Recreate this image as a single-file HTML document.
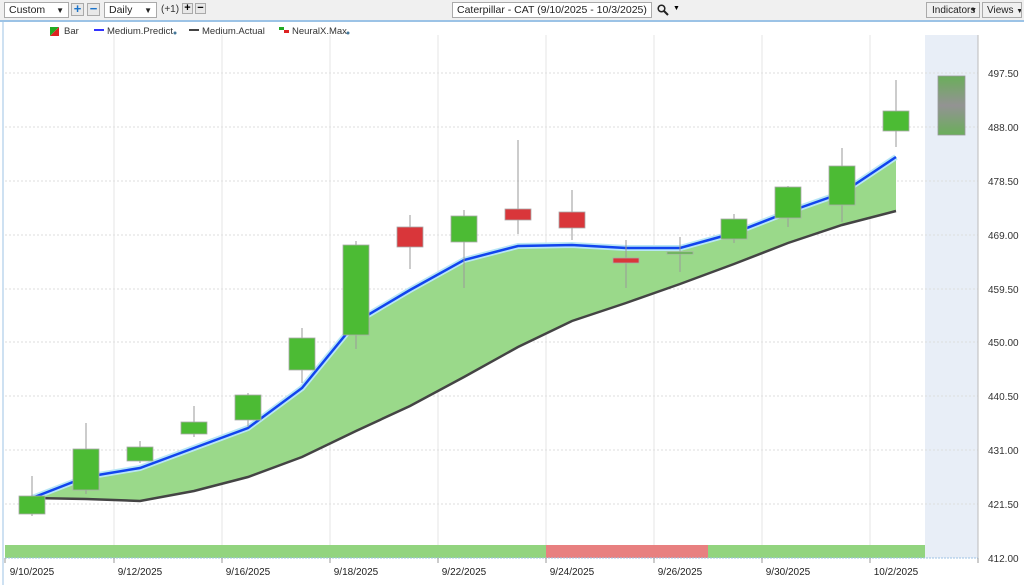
<!DOCTYPE html><html><head><style>
body{margin:0;width:1024px;height:585px;background:#fff;font-family:"Liberation Sans",sans-serif;overflow:hidden;position:relative}
.tb{position:absolute;left:0;top:0;width:1024px;height:20px;background:#f0f0f0;border-bottom:2px solid #9cc3e6}
.bx{position:absolute;top:2px;height:16px;border:1px solid #aaa;background:#fff;font-size:10.5px;line-height:15px;padding-left:4px;box-sizing:border-box;color:#222;white-space:nowrap;overflow:hidden}
.pb{position:absolute;top:3px;width:13px;height:13px;border:1px solid #aaa;background:#e8e8e8;box-sizing:border-box;color:#1a73c9;font-size:13px;line-height:10px;text-align:center;font-weight:bold}
svg text{font-family:"Liberation Sans",sans-serif}
</style></head><body>
<div class="tb">
<div class="bx" style="left:4px;width:65px">Custom<span style="position:absolute;right:4px;font-size:8px">▼</span></div>
<div class="pb" style="left:71px">+</div><div class="pb" style="left:87px">−</div>
<div class="bx" style="left:104px;width:53px">Daily<span style="position:absolute;right:4px;font-size:8px">▼</span></div>
<span style="position:absolute;left:161px;top:4px;font-size:10px;color:#333">(+1)</span>
<div class="pb" style="left:182px;width:11px;height:11px;color:#000;font-size:11px;line-height:9px">+</div><div class="pb" style="left:195px;width:11px;height:11px;color:#000;font-size:11px;line-height:9px">−</div>
<div class="bx" style="left:452px;width:200px;font-size:10.5px;padding-left:4px">Caterpillar - CAT (9/10/2025 - 10/3/2025)</div>
<svg style="position:absolute;left:657px;top:4px" width="12" height="12"><circle cx="4.5" cy="4.5" r="3.3" fill="none" stroke="#222" stroke-width="1.5"/><line x1="7" y1="7" x2="11" y2="11" stroke="#222" stroke-width="2"/></svg><span style="position:absolute;left:673px;top:5px;font-size:7px">▼</span>
<div class="bx" style="left:926px;width:54px;background:#f0f0f0;padding-left:5px;font-size:10px">Indicators<span style="position:absolute;right:2px;top:0;font-size:7px">▼</span></div>
<div class="bx" style="left:982px;width:40px;background:#f0f0f0;font-size:10px">Views <span style="font-size:7px">▼</span></div>
</div>
<svg width="1024" height="585" style="position:absolute;left:0;top:0" viewBox="0 0 1024 585">
<line x1="3" y1="22" x2="3" y2="585" stroke="#9cc3e6"/>
<rect x="925" y="35" width="53" height="523" fill="#e8eef7"/>
<g stroke="#ddd" stroke-dasharray="2,2">
<line x1="5" x2="978" y1="73" y2="73"/><line x1="5" x2="978" y1="127" y2="127"/><line x1="5" x2="978" y1="181" y2="181"/><line x1="5" x2="978" y1="235" y2="235"/><line x1="5" x2="978" y1="289" y2="289"/><line x1="5" x2="978" y1="342" y2="342"/><line x1="5" x2="978" y1="396" y2="396"/><line x1="5" x2="978" y1="450" y2="450"/><line x1="5" x2="978" y1="504" y2="504"/>
</g>
<g stroke="#e4e4e4"><line x1="114" x2="114" y1="35" y2="558"/><line x1="222" x2="222" y1="35" y2="558"/><line x1="330" x2="330" y1="35" y2="558"/><line x1="438" x2="438" y1="35" y2="558"/><line x1="546" x2="546" y1="35" y2="558"/><line x1="654" x2="654" y1="35" y2="558"/><line x1="762" x2="762" y1="35" y2="558"/><line x1="870" x2="870" y1="35" y2="558"/></g>
<line x1="978" y1="35" x2="978" y2="558" stroke="#bbb"/>
<polygon fill="#9ad98a" points="32,498 86,477 140,468 194,448 248,428 302,388 356,322 410,290 464,260 518,246 572,245 626,248 680,248 734,233 788,212 842,193 896,157 896,211 842,225 788,243 734,264 680,284 626,303 572,321 518,347 464,377 410,406 356,431 302,457 248,477 194,491 140,501 86,499 32,498"/>
<polyline fill="none" stroke="#444" stroke-width="2.5" points="32,498 86,499 140,501 194,491 248,477 302,457 356,431 410,406 464,377 518,347 572,321 626,303 680,284 734,264 788,243 842,225 896,211"/>
<polyline fill="none" stroke="#b8e6f5" stroke-width="6" points="32,498 86,477 140,468 194,448 248,428 302,388 356,322 410,290 464,260 518,246 572,245 626,248 680,248 734,233 788,212 842,193 896,157"/>
<polyline fill="none" stroke="#1144ee" stroke-width="2.5" points="32,498 86,477 140,468 194,448 248,428 302,388 356,322 410,290 464,260 518,246 572,245 626,248 680,248 734,233 788,212 842,193 896,157"/>
<g stroke="#999">
<line x1="32" x2="32" y1="476" y2="516"/><line x1="86" x2="86" y1="423" y2="494"/><line x1="140" x2="140" y1="441" y2="463"/><line x1="194" x2="194" y1="406" y2="437"/><line x1="248" x2="248" y1="393" y2="427"/><line x1="302" x2="302" y1="328" y2="383"/><line x1="356" x2="356" y1="241" y2="349"/><line x1="410" x2="410" y1="215" y2="269"/><line x1="464" x2="464" y1="210" y2="288"/><line x1="518" x2="518" y1="140" y2="234"/><line x1="572" x2="572" y1="190" y2="240"/><line x1="626" x2="626" y1="240" y2="288"/><line x1="680" x2="680" y1="237" y2="272"/><line x1="734" x2="734" y1="214" y2="243"/><line x1="788" x2="788" y1="186" y2="227"/><line x1="842" x2="842" y1="148" y2="222"/><line x1="896" x2="896" y1="80" y2="147"/>
</g>
<g stroke="#aaa" stroke-width="0.8" fill="#4cbb34">
<rect x="19" y="496" width="26" height="18"/><rect x="73" y="449" width="26" height="41"/><rect x="127" y="447" width="26" height="14"/><rect x="181" y="422" width="26" height="12"/><rect x="235" y="395" width="26" height="25"/><rect x="289" y="338" width="26" height="32"/><rect x="343" y="245" width="26" height="90"/>
<rect x="397" y="227" width="26" height="20" fill="#d9363a"/><rect x="451" y="216" width="26" height="26"/><rect x="505" y="209" width="26" height="11" fill="#d9363a"/><rect x="559" y="212" width="26" height="16" fill="#d9363a"/><rect x="613" y="258" width="26" height="5" fill="#d9363a"/><rect x="667" y="252" width="26" height="2"/><rect x="721" y="219" width="26" height="20"/><rect x="775" y="187" width="26" height="31"/><rect x="829" y="166" width="26" height="39"/><rect x="883" y="111" width="26" height="20"/>
</g>
<defs><linearGradient id="g" x1="0" y1="0" x2="0" y2="1"><stop offset="0" stop-color="#6aae5a"/><stop offset=".5" stop-color="#939393"/><stop offset="1" stop-color="#6aae5a"/></linearGradient></defs>
<rect x="938" y="76" width="27" height="59" fill="url(#g)" stroke="#999" stroke-width=".8"/>
<rect x="5" y="545" width="541" height="13" fill="#92d47f"/><rect x="546" y="545" width="162" height="13" fill="#e88080"/><rect x="708" y="545" width="217" height="13" fill="#92d47f"/>
<line x1="5" x2="978" y1="558" y2="558" stroke="#9cc3e6" stroke-dasharray="2,1"/>
<g font-size="10" fill="#333">
<text x="988" y="77">497.50</text><text x="988" y="131">488.00</text><text x="988" y="185">478.50</text><text x="988" y="239">469.00</text><text x="988" y="293">459.50</text><text x="988" y="346">450.00</text><text x="988" y="400">440.50</text><text x="988" y="454">431.00</text><text x="988" y="508">421.50</text><text x="988" y="562">412.00</text>
</g>
<g font-size="10" fill="#222" text-anchor="middle">
<text x="32" y="575">9/10/2025</text><text x="140" y="575">9/12/2025</text><text x="248" y="575">9/16/2025</text><text x="356" y="575">9/18/2025</text><text x="464" y="575">9/22/2025</text><text x="572" y="575">9/24/2025</text><text x="680" y="575">9/26/2025</text><text x="788" y="575">9/30/2025</text><text x="896" y="575">10/2/2025</text>
</g>
<g stroke="#999"><line x1="5" x2="5" y1="558" y2="563"/><line x1="114" x2="114" y1="558" y2="563"/><line x1="222" x2="222" y1="558" y2="563"/><line x1="330" x2="330" y1="558" y2="563"/><line x1="438" x2="438" y1="558" y2="563"/><line x1="546" x2="546" y1="558" y2="563"/><line x1="654" x2="654" y1="558" y2="563"/><line x1="762" x2="762" y1="558" y2="563"/><line x1="870" x2="870" y1="558" y2="563"/><line x1="978" x2="978" y1="558" y2="563"/></g>
<polygon points="50,27 59,27 50,36" fill="#2a2"/><polygon points="59,27 59,36 50,36" fill="#d22"/>
<text x="64" y="34" font-size="9.5" fill="#333">Bar</text>
<line x1="94" x2="104" y1="30" y2="30" stroke="#33f" stroke-width="2"/><text x="107" y="34" font-size="9.5" fill="#333">Medium.Predict</text><circle cx="175" cy="33" r="1.5" fill="#479"/>
<line x1="189" x2="199" y1="30" y2="30" stroke="#444" stroke-width="2"/><text x="202" y="34" font-size="9.5" fill="#333">Medium.Actual</text>
<rect x="279" y="27" width="5" height="3" fill="#2a2"/><rect x="284" y="30" width="5" height="3" fill="#d22"/><text x="292" y="34" font-size="9.5" fill="#333">NeuralX.Max</text><circle cx="348" cy="33" r="1.5" fill="#479"/>
</svg>
</body></html>
